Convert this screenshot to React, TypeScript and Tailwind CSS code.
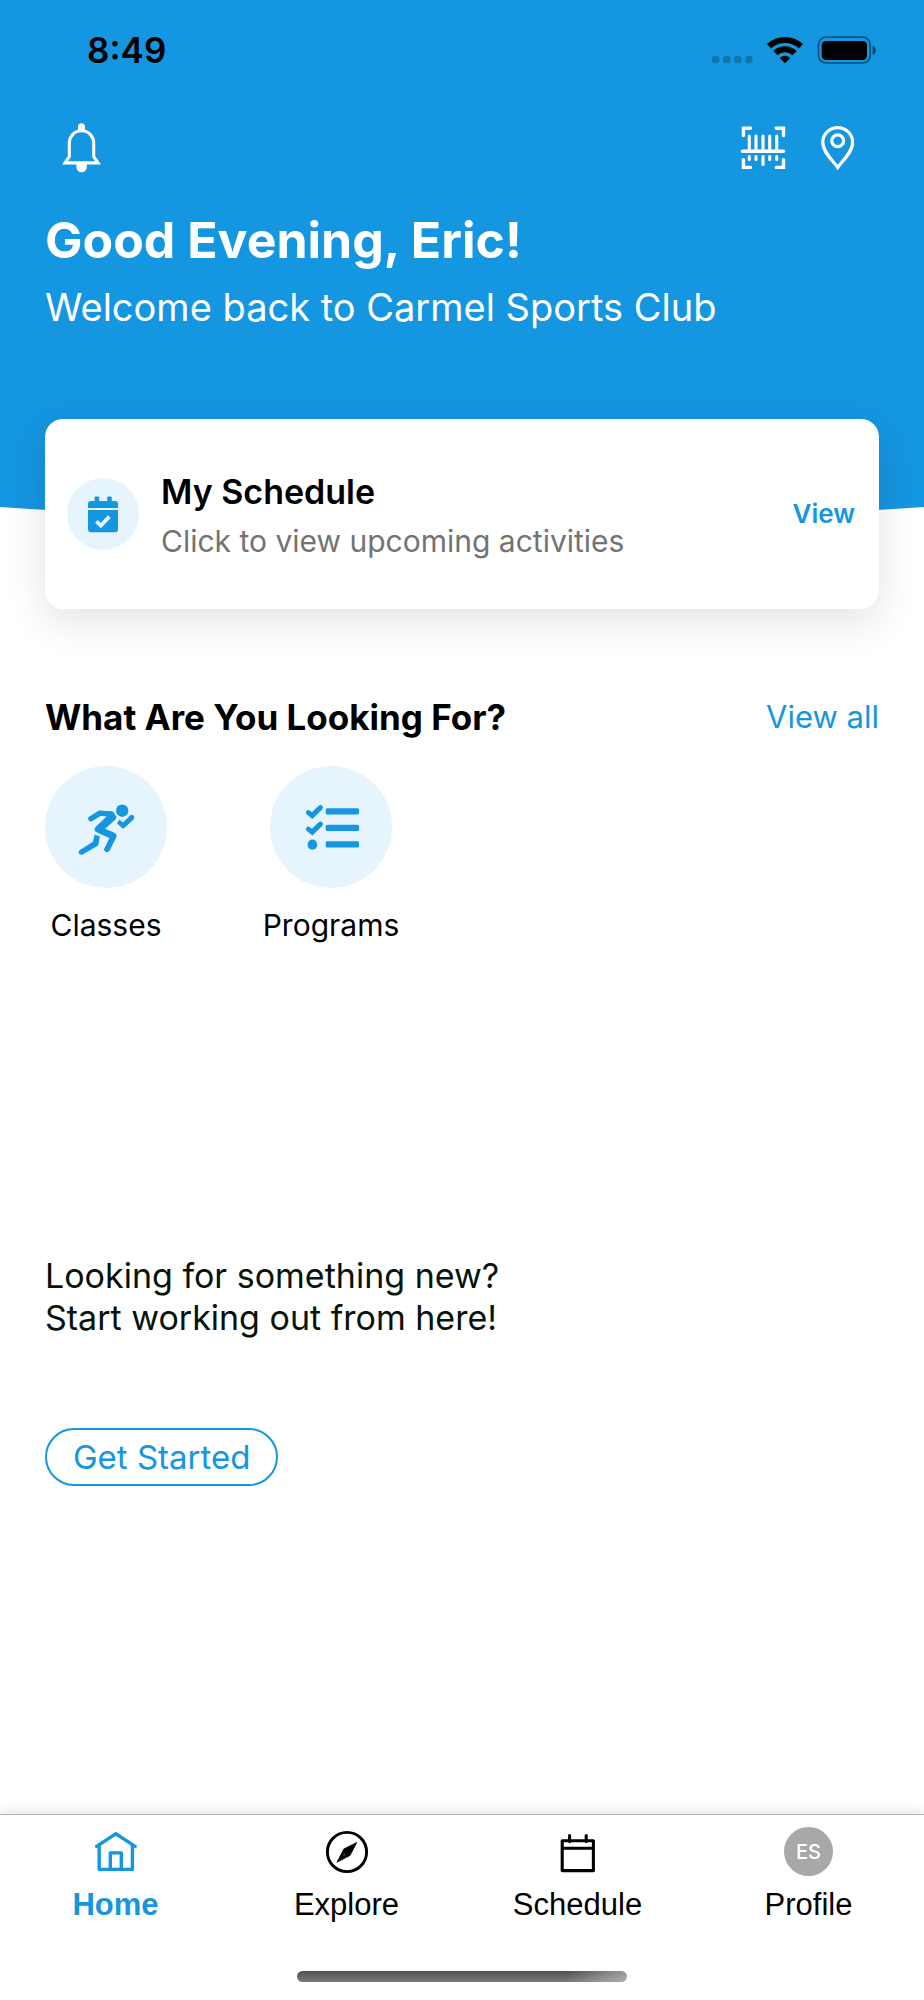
import type { ReactNode } from "react";

function BellIcon() {
  return (
    <svg width="44" height="56" viewBox="0 0 44 56" fill="none" aria-hidden="true">
      <path d="M9.3 36.6V23.5C9.3 16 14.5 10.8 21.5 10.8S33.7 16 33.7 23.5V36.6L38 42.9H5Z" stroke="white" strokeWidth="3.1" />
      <path d="M18 11V6.8a3.5 3.5 0 0 1 7 0V11Z" fill="white" />
      <path d="M16.4 43.5h10.4v3.4a5.2 5.4 0 0 1-10.4 0Z" fill="white" />
    </svg>
  );
}

function BarcodeIcon() {
  return (
    <svg width="46" height="44" viewBox="0 0 46 44" fill="none" stroke="white" strokeLinecap="round" aria-hidden="true">
      <path strokeWidth="3.4" d="M3.4 9.6V2.3H10.4M36.2 2.3H43.5V9.6M3.4 33.6V41.4H10.4M36.2 41.4H43.5V33.6M2.4 25.3H43.6" />
      <path strokeWidth="3.1" d="M9.3 10V24M16 10V24M23 10V24M29.7 10V24M36.7 10V24M9.3 30.6V33.4M16 30.6V33.4M23 30.6V38.4M29.7 30.6V33.4M36.7 30.6V33.4" />
    </svg>
  );
}

function PinIcon() {
  return (
    <svg width="36" height="46" viewBox="0 0 36 46" fill="none" stroke="white" strokeWidth="3.2" aria-hidden="true">
      <path d="M17.7 42.4C13.4 36 2.8 27.6 2.8 17.3A14.9 14.6 0 0 1 32.6 17.3C32.6 27.6 22 36 17.7 42.4Z" />
      <circle cx="17.7" cy="15.7" r="5.9" />
    </svg>
  );
}

function StatusIcons() {
  return (
    <div className="flex items-center gap-[14px]" aria-hidden="true">
      <svg width="42" height="28" viewBox="0 0 42 28" fill="black" opacity="0.22">
        <rect x="1" y="20" width="7.3" height="7.3" rx="2.2" />
        <rect x="12.1" y="20" width="7.3" height="7.3" rx="2.2" />
        <rect x="23.2" y="20" width="7.3" height="7.3" rx="2.2" />
        <rect x="34.3" y="20" width="7.3" height="7.3" rx="2.2" />
      </svg>
      <svg width="36" height="28" viewBox="0 0 36 28" fill="none" stroke="black" strokeWidth="6">
        <path d="M2 10.2A23.4 23.4 0 0 1 34 10.2" />
        <path d="M8.4 17.1A14 14 0 0 1 27.6 17.1" />
        <path d="M18 27.3L12.7 21.9A7.7 7.7 0 0 1 23.3 21.9Z" fill="black" stroke="none" />
      </svg>
      <svg width="59" height="28" viewBox="0 0 59 28" fill="black">
        <rect x="1.5" y="1.2" width="51.7" height="25.8" rx="7.5" fill="none" stroke="black" strokeOpacity="0.45" strokeWidth="1.7" />
        <rect x="4.7" y="5" width="45.3" height="19" rx="4.2" />
        <path d="M55.6 9.7c4.4 1.3 4.4 8 0 9.3Z" fillOpacity="0.5" />
      </svg>
    </div>
  );
}

function CalendarCheckIcon() {
  return (
    <svg width="32" height="37" viewBox="0 0 32 37" fill="#1596e1" aria-hidden="true">
      <path d="M1 12V8a3 3 0 0 1 3-3H7.6V1.4a1 1 0 0 1 1-1h2.6a1 1 0 0 1 1 1V5h8V1.4a1 1 0 0 1 1-1h2.6a1 1 0 0 1 1 1V5H28a3 3 0 0 1 3 3v4Z" />
      <path d="M1 14H31V33.2a3 3 0 0 1-3 3H4a3 3 0 0 1-3-3Z" />
      <path d="M9.4 25.4L13.8 29.6L22.4 20.6" fill="none" stroke="#e6f5fd" strokeWidth="3.8" />
    </svg>
  );
}

function RunnerIcon() {
  return (
    <svg width="57" height="58" viewBox="0 -6 57 58" fill="none" stroke="#1596e1" strokeWidth="5.4" strokeLinecap="round" strokeLinejoin="round" aria-hidden="true">
      <circle cx="44.2" cy="6.7" r="6.2" fill="#1596e1" stroke="none" />
      <path d="M12.9 14.7L21.9 9.1L33.5 10.2" />
      <path d="M22 6.8L34.4 7.6L38.4 12.4L38 15L27.2 24.8L36.8 29Q39.2 30.6 38.2 33.4L31.4 47Q27.6 50 25.8 45.8L31.4 34L18 28Q15.2 25.8 17.6 23L29.6 11.6Z" fill="#1596e1" stroke="none" />
      <path d="M16.6 30.4L21.8 32.6L20.4 40.4Q20 41.4 19 42.2L4.6 50.6Q1 51.4 0.6 48.4Q0.6 46.8 1.8 46L15 37.8Z" fill="#1596e1" stroke="none" />
      <path d="M41.4 15.4L39 19.2L44 24Q45.2 24.8 46.4 24L56 15Q57 13 55.6 11.4Q54 10.2 52.4 11.2L45 18.4Z" fill="#1596e1" stroke="none" />
    </svg>
  );
}

function ChecklistIcon() {
  return (
    <svg width="58" height="58" viewBox="0 0 58 58" fill="#1596e1" aria-hidden="true">
      <path d="M6.4 14.6L10.2 17.6L18.4 9.6M6.4 31.1L10.2 34.1L18.4 26.1" fill="none" stroke="#1596e1" strokeWidth="5" strokeLinecap="round" />
      <ellipse cx="10.4" cy="46.7" rx="4.8" ry="5.1" />
      <rect x="23.7" y="10.2" width="33.4" height="6.3" rx="1.5" />
      <rect x="23.7" y="26.7" width="33.4" height="6.3" rx="1.5" />
      <rect x="23.7" y="43.2" width="33.4" height="6.3" rx="1.5" />
    </svg>
  );
}

function HomeIcon() {
  return (
    <svg width="44" height="42" viewBox="0 0 44 42" fill="none" stroke="currentColor" strokeWidth="3.4" aria-hidden="true">
      <path d="M2.6 15.4L21.8 2.9L41.2 15.4" strokeLinecap="round" />
      <path d="M5.2 14V38.4H38.4V14" strokeLinejoin="round" />
      <path d="M16.3 38V21.9H27.3V38" strokeLinejoin="round" />
    </svg>
  );
}

function CompassIcon() {
  return (
    <svg width="44" height="44" viewBox="-22 -22 44 44" fill="none" aria-hidden="true">
      <circle r="19.6" stroke="currentColor" strokeWidth="2.9" />
      <path d="M9.8 -9.6L-3.2 -3L-10 10.2L3 3.4Z M-3.2 1.6L-1.4 3.2L-4 4.2Z" fill="currentColor" fillRule="evenodd" stroke="currentColor" strokeWidth="0.8" strokeLinejoin="round" />
    </svg>
  );
}

function CalendarIcon() {
  return (
    <svg width="36" height="42" viewBox="0 0 36 42" fill="none" stroke="currentColor" strokeWidth="3.1" strokeLinecap="round" strokeLinejoin="round" aria-hidden="true">
      <path d="M2.2 9.7H33.4V39.6H2.2ZM2.2 17.3H33.4M9.6 4.6V10.6M26.2 4.6V10.6" />
    </svg>
  );
}

function Category({ label, icon }: { label: string; icon: ReactNode }) {
  return (
    <a href="#" className="flex w-[122px] flex-col items-center">
      <span className="flex size-[122px] items-center justify-center rounded-full bg-[#e6f5fd]">{icon}</span>
      <span className="mt-[17px] text-[30px] leading-[40px] whitespace-nowrap">{label}</span>
    </a>
  );
}

function Tab({ label, icon, active }: { label: string; icon: ReactNode; active?: boolean }) {
  return (
    <a
      href="#"
      aria-current={active ? "page" : undefined}
      className={active ? "flex flex-col items-center font-bold text-[#1596e1]" : "flex flex-col items-center text-black"}
    >
      <span className="flex h-[49px] items-center justify-center">{icon}</span>
      <span className="mt-[11px] font-['Liberation_Sans',sans-serif] text-[31px] leading-[36px]">{label}</span>
    </a>
  );
}

export default function App() {
  return (
    <div className="flex min-h-screen flex-col bg-white font-['Inter',sans-serif] text-black">
      <header className="bg-[#1596e1] pb-[176px] text-white">
        <div className="flex h-[100px] items-center justify-between pr-[48px] pl-[87px] text-black">
          <span className="text-[35px] leading-[42px] font-semibold">8:49</span>
          <StatusIcons />
        </div>
        <div className="flex h-[96px] items-center justify-between pr-[68px] pl-[60px]">
          <button type="button" aria-label="Notifications">
            <BellIcon />
          </button>
          <div className="flex items-center gap-[34px]">
            <button type="button" aria-label="Scan barcode">
              <BarcodeIcon />
            </button>
            <button type="button" aria-label="Locations">
              <PinIcon />
            </button>
          </div>
        </div>
        <div className="px-[45px]">
          <h1 className="mt-[11px] text-[50px] leading-[66px] font-bold">Good Evening, Eric!</h1>
          <p className="mt-[10px] text-[38px] leading-[48px]">Welcome back to Carmel Sports Club</p>
        </div>
      </header>
      <svg className="h-[16px] w-full shrink-0" viewBox="0 0 924 16" preserveAspectRatio="none" aria-hidden="true">
        <path d="M0 -1V0Q462 32 924 0V-1Z" fill="#1596e1" />
      </svg>

      <main className="relative -mt-[104px] flex-1 px-[45px]">
        <section className="flex h-[190px] items-center rounded-[18px] bg-white pr-[24px] pl-[22px] shadow-[0_12px_40px_rgba(0,20,10,0.12)]">
          <span className="flex size-[72px] shrink-0 items-center justify-center rounded-full bg-[#e6f5fd]">
            <CalendarCheckIcon />
          </span>
          <div className="ml-[22px] flex-1">
            <h2 className="text-[34px] leading-[54px] font-semibold">My Schedule</h2>
            <p className="text-[30px] leading-[45px] text-[#737373]">Click to view upcoming activities</p>
          </div>
          <a href="#" className="text-[26px] leading-[36px] font-semibold text-[#1596e1]">View</a>
        </section>

        <section>
          <div className="mt-[86px] flex items-center justify-between">
            <h2 className="text-[35px] leading-[44px] font-bold">What Are You Looking For?</h2>
            <a href="#" className="text-[31px] leading-[44px] text-[#1596e1]">View all</a>
          </div>
          <div className="mt-[27px] flex gap-[103px]">
            <Category label="Classes" icon={<RunnerIcon />} />
            <Category label="Programs" icon={<ChecklistIcon />} />
          </div>
        </section>

        <section className="mt-[310px]">
          <p className="text-[34px] leading-[42px] text-[#071208]">
            Looking for something new?
            <br />
            Start working out from here!
          </p>
          <button type="button" className="mt-[89px] h-[58px] rounded-full border-2 border-[#1596e1] px-[26px] text-[33px] leading-[40px] text-[#1596e1]">
            Get Started
          </button>
        </section>
      </main>

      <nav className="border-t border-[#b4b4b4] bg-white pb-[18px] shadow-[0_-2px_12px_rgba(0,0,0,0.12)]">
        <div className="grid grid-cols-4 pt-[12px]">
          <Tab label="Home" icon={<HomeIcon />} active />
          <Tab label="Explore" icon={<CompassIcon />} />
          <Tab label="Schedule" icon={<CalendarIcon />} />
          <Tab
            label="Profile"
            icon={<span className="flex size-[49px] items-center justify-center rounded-full bg-[#a8a8a8] text-[20px] font-medium text-white">ES</span>}
          />
        </div>
        <div className="mx-auto mt-[48px] h-[11px] w-[330px] rounded-full bg-[linear-gradient(to_right,transparent_82%,rgba(255,255,255,0.4)),linear-gradient(to_bottom,#505050,#7c7c7c)]" />
      </nav>
    </div>
  );
}
